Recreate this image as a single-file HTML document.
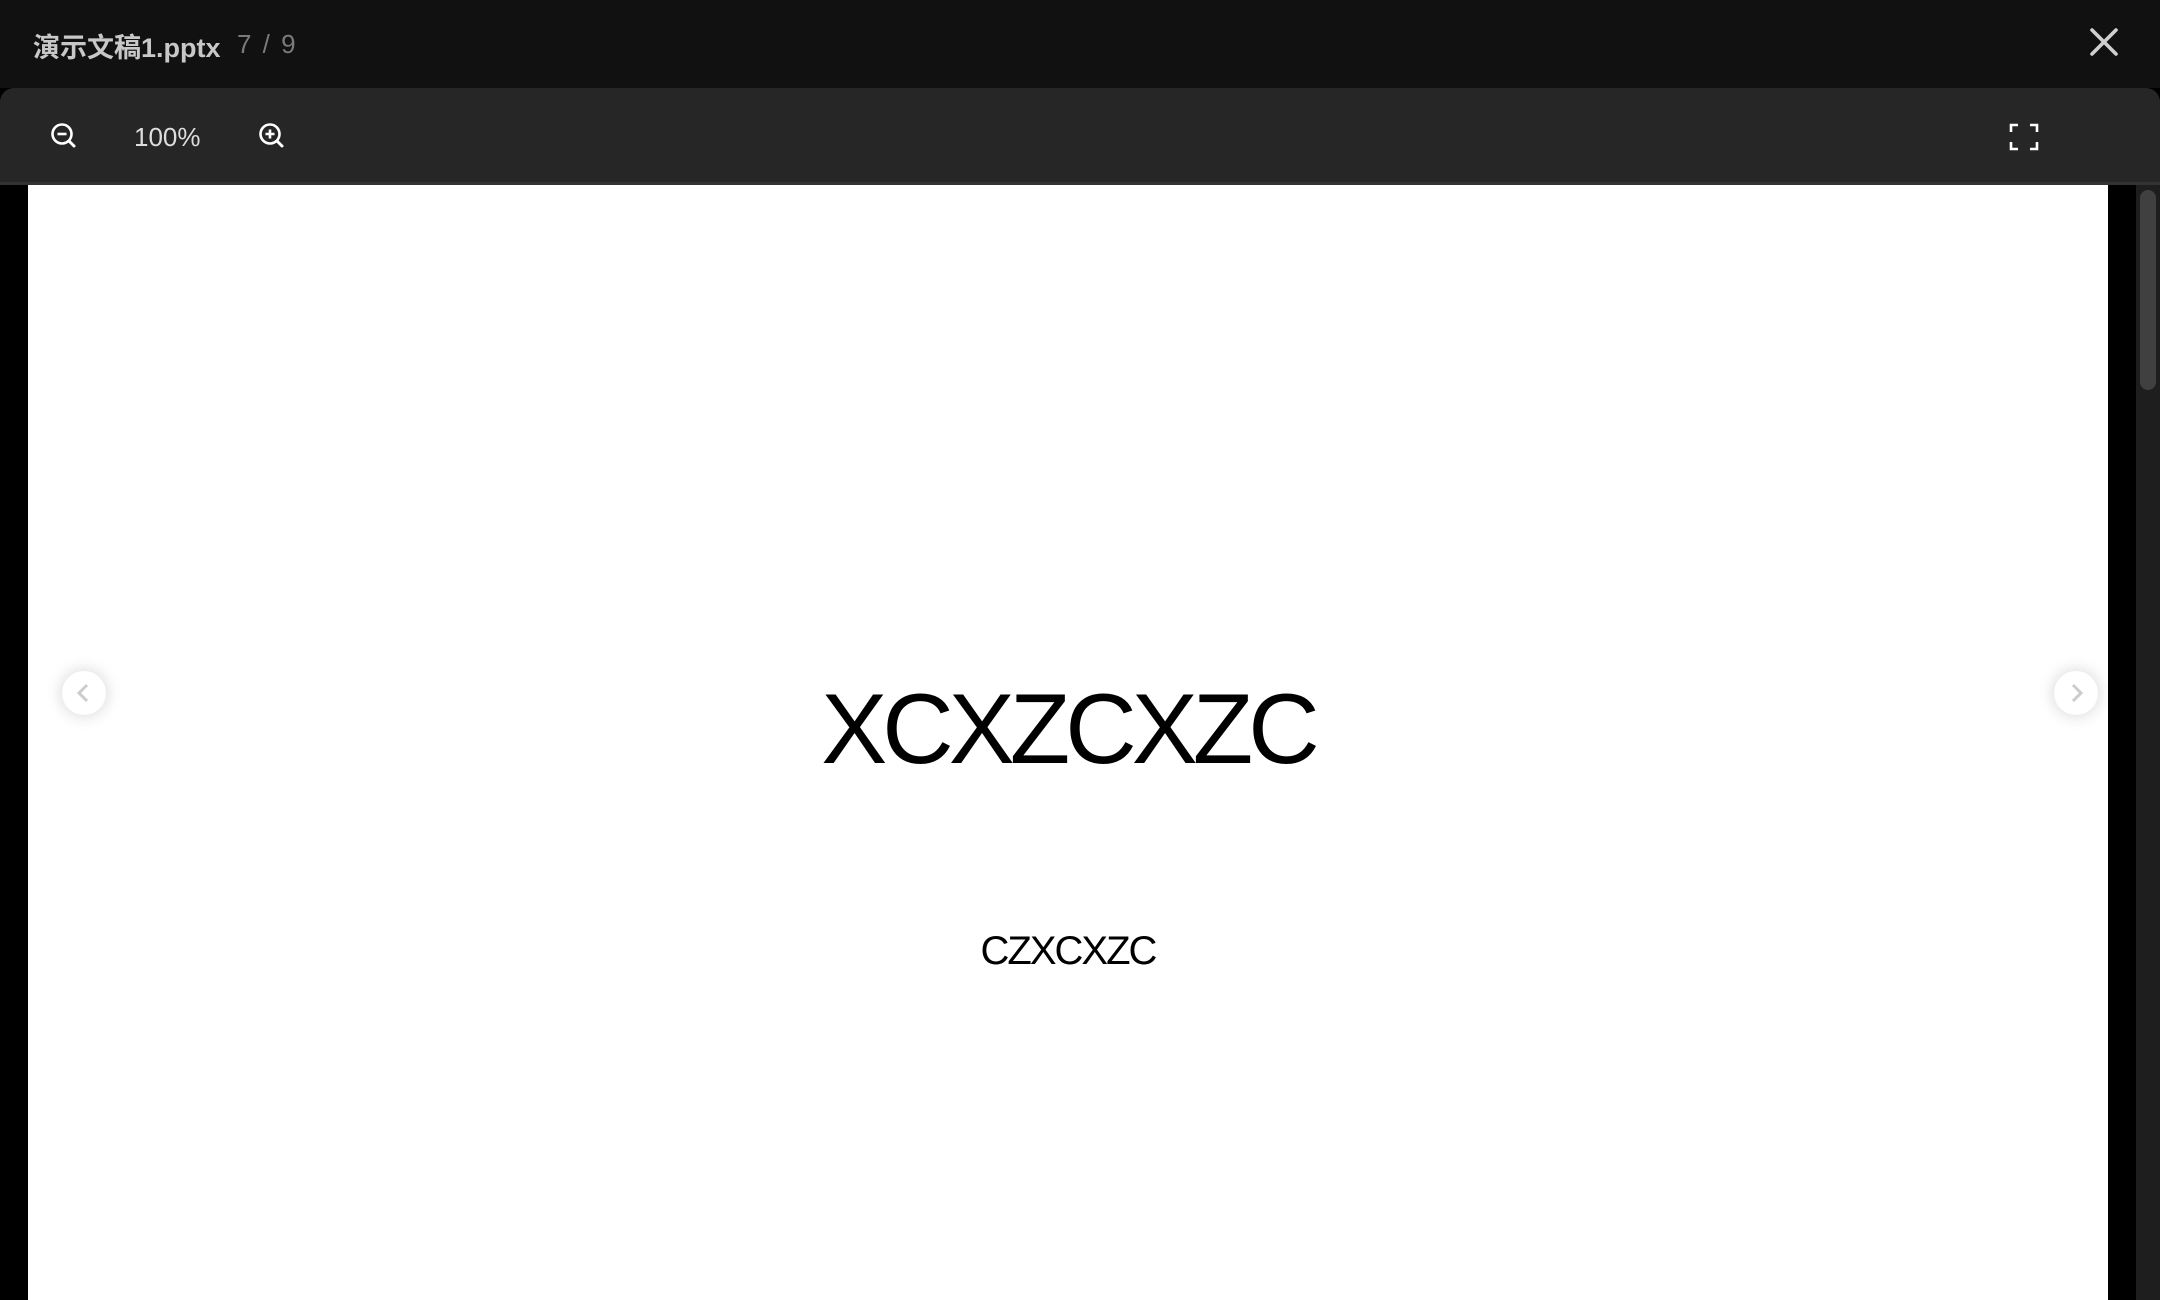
<!DOCTYPE html>
<html><head><meta charset="utf-8"><style>
*{margin:0;padding:0;box-sizing:border-box}
body{width:2160px;height:1300px;overflow:hidden;background:#000;font-family:"Liberation Sans","Noto Sans CJK SC",sans-serif;position:relative}
.hdr{position:absolute;left:0;top:0;width:2160px;height:88px;background:#111}
.title{position:absolute;left:33px;top:26px;font-size:27px;font-weight:bold;color:#c8c8c8;white-space:nowrap}
.pg{position:absolute;left:237px;top:29px;font-size:26px;letter-spacing:2px;color:#7a7a7a;white-space:nowrap}
.tb{position:absolute;left:0;top:88px;width:2160px;height:97px;background:#262626;border-radius:14px 14px 0 0;border-bottom:3px solid #333}
.zoom{position:absolute;left:134px;top:122px;font-size:26px;color:#ddd}
.slide{position:absolute;left:28px;top:185px;width:2080px;height:1115px;background:#fff}
.track{position:absolute;left:2136px;top:185px;width:24px;height:1115px;background:#1e1e1e}
.thumb{position:absolute;left:2140px;top:190px;width:16px;height:200px;background:#404040;border-radius:8px}
.big{position:absolute;left:0;width:2080px;text-align:center;top:485px;font-size:99px;letter-spacing:-5px;color:#000;line-height:1.2}
.small{position:absolute;left:0;width:2080px;text-align:center;top:742px;font-size:40px;letter-spacing:-2px;color:#000;line-height:1.2}
.nav{position:absolute;width:44px;height:44px;border-radius:50%;background:#fff;box-shadow:0 0 16px rgba(0,0,0,0.18);top:671px}
</style></head><body>
<div class="hdr">
<div class="title">演示文稿1.pptx</div>
<div class="pg">7 / 9</div>
<svg style="position:absolute;left:2088px;top:26px" width="32" height="32" viewBox="0 0 32 32"><path d="M4 4L28 28M28 4L4 28" stroke="#d0d0d0" stroke-width="3.6" stroke-linecap="round"/></svg>
</div>
<div class="tb"></div>
<svg style="position:absolute;left:48px;top:120px" width="32" height="32" viewBox="0 0 32 32"><circle cx="14" cy="14" r="9.5" fill="none" stroke="#fff" stroke-width="2.6"/><path d="M9.5 14h9" stroke="#fff" stroke-width="2.6"/><path d="M21 21l5 5" stroke="#fff" stroke-width="3" stroke-linecap="round"/></svg>
<div class="zoom">100%</div>
<svg style="position:absolute;left:256px;top:120px" width="32" height="32" viewBox="0 0 32 32"><circle cx="14" cy="14" r="9.5" fill="none" stroke="#fff" stroke-width="2.6"/><path d="M9.5 14h9M14 9.5v9" stroke="#fff" stroke-width="2.6"/><path d="M21 21l5 5" stroke="#fff" stroke-width="3" stroke-linecap="round"/></svg>
<svg style="position:absolute;left:2008px;top:122px" width="32" height="30" viewBox="0 0 32 30"><path d="M3 10V3h7M22 3h7v7M29 20v7h-7M10 27H3v-7" fill="none" stroke="#fff" stroke-width="2.6"/></svg>
<div class="slide">
<div class="big">XCXZCXZC</div>
<div class="small">CZXCXZC</div>
</div>
<div class="nav" style="left:62px"><svg width="44" height="44" viewBox="0 0 44 44"><path d="M25 14l-8 8 8 8" fill="none" stroke="#ccc" stroke-width="3"/></svg></div>
<div class="nav" style="left:2054px"><svg width="44" height="44" viewBox="0 0 44 44"><path d="M19 14l8 8-8 8" fill="none" stroke="#ccc" stroke-width="3"/></svg></div>
<div class="track"></div><div class="thumb"></div>
</body></html>
